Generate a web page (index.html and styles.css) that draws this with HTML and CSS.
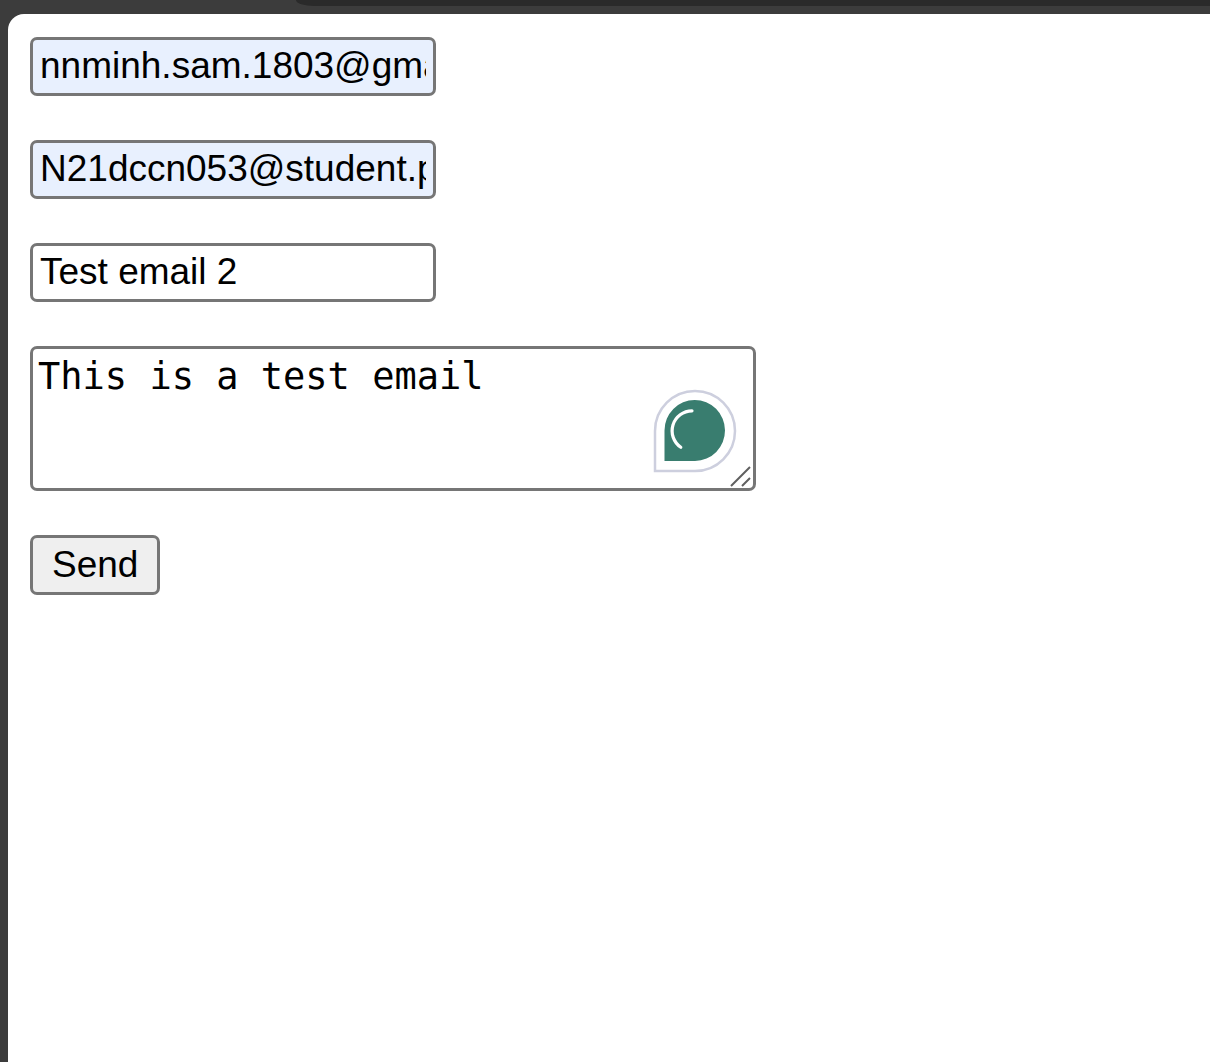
FILE: index.html
```
<!DOCTYPE html>
<html lang="en">
<head>
<meta charset="utf-8">
<title>Send email</title>
<link rel="stylesheet" href="styles.css">
</head>
<body>
<div class="browser">
  <div class="toolbar"><div class="address-bar"></div></div>
  <main class="page">
    <form class="mail-form">
      <input class="field autofilled" type="text" name="from" aria-label="From" value="nnminh.sam.1803@gmail.com">
      <input class="field autofilled" type="text" name="to" aria-label="To" value="N21dccn053@student.ptithcm.edu.vn">
      <input class="field" type="text" name="subject" aria-label="Subject" value="Test email 2">
      <div class="message">
        <textarea class="message-text" name="message" aria-label="Message" spellcheck="false">This is a test email</textarea>
        <svg class="assistant" viewBox="0 0 84 84" aria-hidden="true">
          <path d="M2 82V42A40 40 0 1 1 42 82Z" fill="#fff" stroke="#cdcfde" stroke-width="2.5"/>
          <path d="M11.500 72V41.500A30.250 30.500 0 1 1 42 72Z" fill="#397d6f"/>
          <path d="M39 21.800A20 20 0 0 0 27.800 58.300" fill="none" stroke="#fff" stroke-width="3.200" stroke-linecap="round"/>
        </svg>
        <svg class="grip" viewBox="0 0 22 22" aria-hidden="true">
          <path d="M1 20L20 1M12 20L20 12" fill="none" stroke="#606060" stroke-width="2"/>
        </svg>
      </div>
      <button class="send" type="button">Send</button>
    </form>
  </main>
</div>
</body>
</html>
```
FILE: styles.css
```
* {
  box-sizing: border-box;
}

body {
  margin: 0;
  background: #3c3c3c;
  color: #000;
  font-family: "Liberation Sans", Arial, sans-serif;
  font-size: 37px;
}

.browser {
  display: flex;
  flex-direction: column;
  min-height: 100vh;
}

.toolbar {
  height: 14px;
  padding-left: 296px;
}

.address-bar {
  height: 6px;
  background: #2a2a2a;
  border-bottom-left-radius: 24px 8px;
}

.page {
  flex: 1;
  margin-left: 8px;
  padding: 23px 22px;
  background: #fff;
  border-top-left-radius: 16px;
}

.mail-form {
  display: flex;
  flex-direction: column;
  align-items: flex-start;
  gap: 44px;
}

.field,
.message-text,
.send {
  margin: 0;
  border: 3px solid #767676;
  border-radius: 7px;
  color: #000;
  font: inherit;
}

.field {
  width: 406px;
  max-width: 100%;
  height: 59px;
  padding: 0 7px 1px;
  background: #fff;
}

.autofilled {
  background: #e8f0fe;
}

.message {
  position: relative;
  width: 726px;
  max-width: 100%;
}

.message-text {
  display: block;
  width: 100%;
  height: 145px;
  padding: 6px 5px;
  background: #fff;
  font-family: "DejaVu Sans Mono", monospace;
  line-height: 43px;
  resize: none;
}

.assistant {
  position: absolute;
  right: 19px;
  bottom: 18px;
  width: 84px;
  height: 84px;
}

.grip {
  position: absolute;
  right: 4px;
  bottom: 3px;
  width: 22px;
  height: 22px;
}

.send {
  height: 60px;
  padding: 0 19px;
  background: #efefef;
}
```
